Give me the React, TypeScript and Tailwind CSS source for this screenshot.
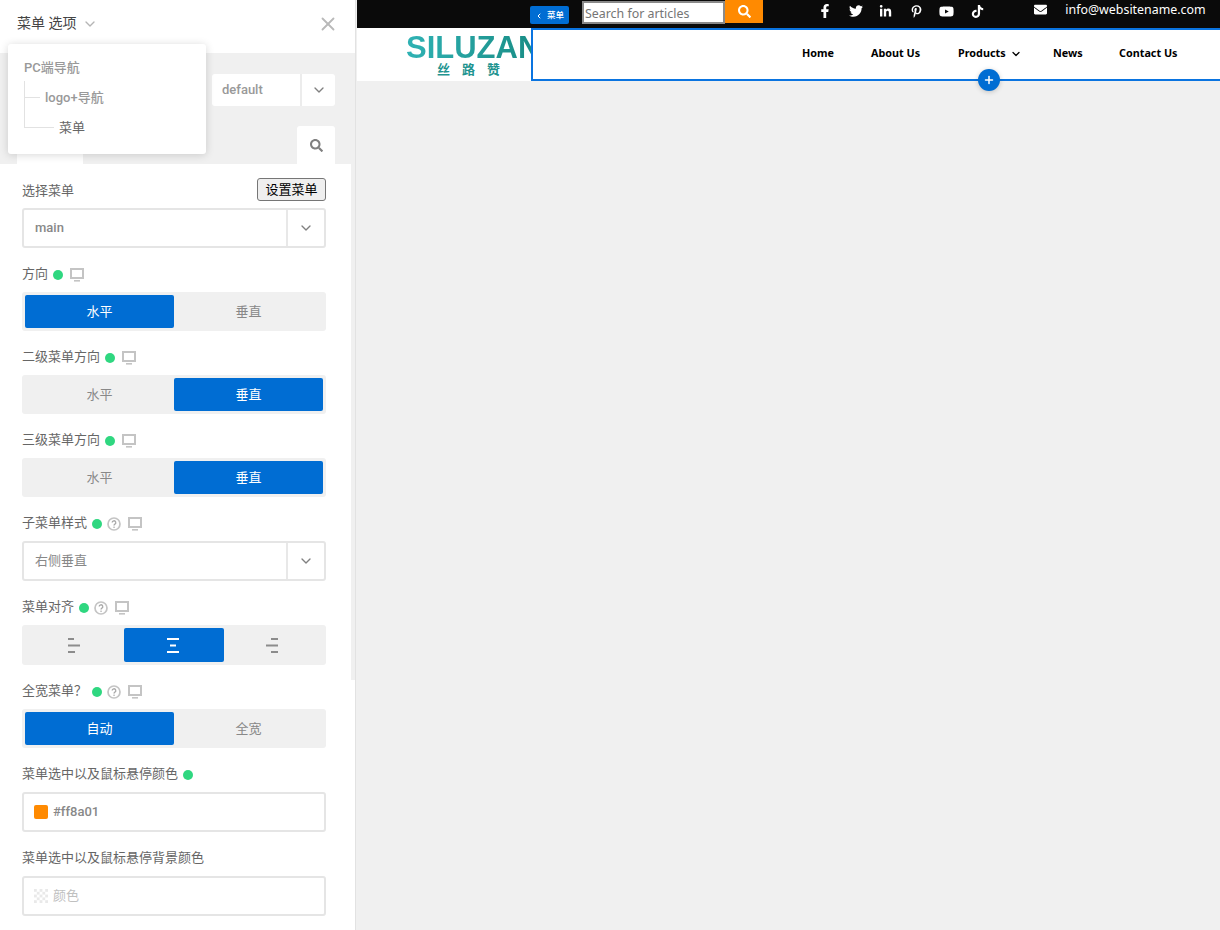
import type { ReactNode } from "react";
import { ChevronDown, ChevronLeft, Plus, X } from "lucide-react";
import {
  FaEnvelope,
  FaFacebookF,
  FaLinkedinIn,
  FaPinterestP,
  FaSearch,
  FaTiktok,
  FaTwitter,
  FaYoutube,
} from "react-icons/fa";

const socials = [
  { Icon: FaFacebookF, size: 14 },
  { Icon: FaTwitter, size: 14 },
  { Icon: FaLinkedinIn, size: 13 },
  { Icon: FaPinterestP, size: 13 },
  { Icon: FaYoutube, size: 15 },
  { Icon: FaTiktok, size: 13 },
];

function Dot() {
  return <span className="h-[10px] w-[10px] shrink-0 rounded-full bg-[#2fd780]" />;
}

function MonitorIcon() {
  return (
    <svg width="14" height="14" viewBox="0 0 14 14" className="shrink-0">
      <rect x="1" y="1" width="12" height="9" fill="none" stroke="#c4c4c4" strokeWidth="2" />
      <rect x="4" y="12" width="6" height="1.6" fill="#c4c4c4" />
    </svg>
  );
}

function HelpIcon() {
  return (
    <svg width="14" height="14" viewBox="0 0 14 14" className="shrink-0">
      <circle cx="7" cy="7" r="6" fill="none" stroke="#c4c4c4" strokeWidth="1.7" />
      <path d="M5.2 5.6a1.8 1.8 0 1 1 2.7 1.5c-.6.4-.9.7-.9 1.4" fill="none" stroke="#a8a8a8" strokeWidth="1.3" />
      <rect x="6.4" y="9.6" width="1.3" height="1.3" fill="#a8a8a8" />
    </svg>
  );
}

function Label({ text, dot, help, monitor }: { text: string; dot?: boolean; help?: boolean; monitor?: boolean }) {
  return (
    <div className="mb-[9px] flex h-[18px] items-center gap-[5px] pt-[2px] text-[13px] text-[#666]">
      <span className="pb-[2px]">{text}</span>
      {dot && <Dot />}
      {help && <HelpIcon />}
      {monitor && <span className="ml-[2px] flex"><MonitorIcon /></span>}
    </div>
  );
}

function SelectBox({ value, medium }: { value: string; medium?: boolean }) {
  return (
    <div className="flex h-[40px] items-stretch rounded-[3px] border-2 border-[#e5e5e5] bg-white">
      <div className={medium ? "flex flex-1 items-center pl-[11px] text-[13px] font-medium text-[#888]" : "flex flex-1 items-center pl-[11px] text-[13px] text-[#888]"}>
        {value}
      </div>
      <div className="flex w-[38px] items-center justify-center border-l-2 border-[#e8e8e8]">
        <ChevronDown size={16} strokeWidth={2} className="text-[#808080]" />
      </div>
    </div>
  );
}

function Toggle({ options, active }: { options: string[]; active: number }) {
  return (
    <div className="flex h-[39px] rounded-[3px] bg-[#f0f0f0] p-[3px]">
      {options.map((option, i) => (
        <div
          key={option}
          className={
            i === active
              ? "flex flex-1 items-center justify-center rounded-[2px] bg-[#006dd3] text-[13px] text-white"
              : "flex flex-1 items-center justify-center text-[13px] text-[#888]"
          }
        >
          {option}
        </div>
      ))}
    </div>
  );
}

function AlignIcon({ align, color }: { align: "left" | "center" | "right"; color: string }) {
  const rows =
    align === "left"
      ? [[0, 6], [0, 12], [0, 7]]
      : align === "center"
        ? [[0, 12], [3, 6], [0, 12]]
        : [[5, 7], [0, 12], [5, 7]];
  return (
    <svg width="12" height="16" viewBox="0 0 12 16">
      {rows.map(([x, w], i) => (
        <rect key={i} x={x} y={1 + i * 6.5} width={w} height="2" fill={color} />
      ))}
    </svg>
  );
}

function Field({ children }: { children: ReactNode }) {
  return <div className="mb-[17px]">{children}</div>;
}

function TransparentSwatch() {
  const cells = Array.from({ length: 25 }, (_, i) => i);
  return (
    <svg width="14" height="14" viewBox="0 0 15 15" className="shrink-0">
      {cells.map((c) =>
        c % 2 === 0 ? (
          <rect key={c} x={(c % 5) * 3} y={Math.floor(c / 5) * 3} width="3" height="3" fill="#e9e9e9" />
        ) : null,
      )}
    </svg>
  );
}

function Sidebar() {
  return (
    <aside className="relative h-[930px] w-[356px] shrink-0 overflow-hidden border-r border-[#e2e2e2] bg-white">
      <header className="flex h-[53px] items-center justify-between pl-[17px] pr-[16px]">
        <div className="flex items-center gap-[6px] pb-[6px] text-[14px] text-[#444]">
          <span>菜单 选项</span>
          <ChevronDown size={16} className="text-[#b5b5b5]" />
        </div>
        <X size={22} strokeWidth={2} className="mb-[5px] text-[#b9b9b9]" />
      </header>

      <div className="flex h-[111px] flex-col items-end bg-[#f0f0f0] pl-[17px] pr-[20px] pt-[21px]">
        <div className="flex h-[32px] w-[123px] rounded-[3px] bg-white">
          <div className="flex flex-1 items-center border-r-2 border-[#ececec] pl-[10px] text-[13px] font-medium text-[#999]">default</div>
          <div className="flex w-[33px] items-center justify-center">
            <ChevronDown size={16} className="text-[#808080]" />
          </div>
        </div>
        <div className="mt-auto flex w-full items-end justify-between">
          <div className="h-[10px] w-[66px] bg-white" />
          <div className="flex h-[38px] w-[38px] items-center justify-center rounded-t-[3px] bg-white">
            <FaSearch size={13} className="text-[#808080]" />
          </div>
        </div>
      </div>

      <div className="h-[766px] w-[351px] overflow-hidden pl-[22px] pr-[25px] pt-[14px]">
        <div className="mb-[7px] flex h-[23px] items-center justify-between text-[13px] text-[#666]">
          <span className="pt-[2px]">选择菜单</span>
          <button type="button" className="h-[23px] w-[69px] rounded-[3px] border border-[#767676] bg-[#efefef] text-[13px] text-black">
            设置菜单
          </button>
        </div>
        <Field><SelectBox value="main" medium /></Field>

        <Field>
          <Label text="方向" dot monitor />
          <Toggle options={["水平", "垂直"]} active={0} />
        </Field>
        <Field>
          <Label text="二级菜单方向" dot monitor />
          <Toggle options={["水平", "垂直"]} active={1} />
        </Field>
        <Field>
          <Label text="三级菜单方向" dot monitor />
          <Toggle options={["水平", "垂直"]} active={1} />
        </Field>
        <Field>
          <Label text="子菜单样式" dot help monitor />
          <SelectBox value="右侧垂直" />
        </Field>
        <Field>
          <Label text="菜单对齐" dot help monitor />
          <div className="flex h-[40px] rounded-[3px] bg-[#f0f0f0] py-[3px]">
            <div className="flex w-[102px] items-center justify-center pl-[2px]"><AlignIcon align="left" color="#8c8c8c" /></div>
            <div className="flex w-[100px] items-center justify-center rounded-[2px] bg-[#006dd3] pr-[2px]"><AlignIcon align="center" color="#ffffff" /></div>
            <div className="flex w-[102px] items-center justify-center pr-[6px]"><AlignIcon align="right" color="#8c8c8c" /></div>
          </div>
        </Field>
        <Field>
          <Label text="全宽菜单？" dot help monitor />
          <Toggle options={["自动", "全宽"]} active={0} />
        </Field>
        <Field>
          <Label text="菜单选中以及鼠标悬停颜色" dot />
          <div className="flex h-[40px] items-center gap-[5px] rounded-[3px] border-2 border-[#e5e5e5] pl-[10px] text-[13px] font-medium text-[#888]">
            <span className="h-[14px] w-[14px] rounded-[2px] bg-[#ff8a01]" />
            #ff8a01
          </div>
        </Field>
        <Field>
          <Label text="菜单选中以及鼠标悬停背景颜色" />
          <div className="flex h-[40px] items-center gap-[5px] rounded-[3px] border-2 border-[#e5e5e5] pl-[10px] text-[13px] text-[#c0c0c0]">
            <TransparentSwatch />
            颜色
          </div>
        </Field>
      </div>

      {/* scrollbar thumb */}
      <div className="absolute left-[351px] top-[164px] h-[516px] w-[4px] bg-[#f0f0f0]" />

      {/* breadcrumb popover */}
      <div className="absolute left-[8px] top-[44px] h-[110px] w-[198px] rounded-[3px] bg-white shadow-[0_1px_8px_rgba(0,0,0,0.16)]">
        <div className="absolute left-[16px] top-[15px] text-[13px] font-medium leading-[18px] text-[#999]">PC端导航</div>
        <div className="absolute left-[16px] top-[37px] h-[47px] w-px bg-[#e2e2e2]" />
        <div className="absolute left-[16px] top-[53px] h-px w-[16px] bg-[#e2e2e2]" />
        <div className="absolute left-[16px] top-[83px] h-px w-[30px] bg-[#e2e2e2]" />
        <div className="absolute left-[37px] top-[45px] text-[13px] font-medium leading-[18px] text-[#999]">logo+导航</div>
        <div className="absolute left-[51px] top-[75px] text-[13px] leading-[18px] text-[#666]">菜单</div>
      </div>
    </aside>
  );
}

function TopBar() {
  return (
    <div className="flex h-[28px] items-start bg-[#0a0a0a] pl-[173px] text-white">
      <div className="mt-[6px] flex h-[18px] w-[39px] items-center justify-center gap-[4px] rounded-[2px] bg-[#006dd3] pt-px text-[8.5px] font-medium">
        <ChevronLeft size={8} strokeWidth={3} />
        <span>菜单</span>
      </div>
      <div className="ml-[13px] mt-px flex h-[23px] w-[143px] items-center border-2 border-[#8a8a8a] bg-white pl-px pt-[3px] font-['Noto_Sans'] text-[12.4px] text-[#757575]">
        Search for articles
      </div>
      <div className="flex h-[23px] w-[38px] items-center justify-center bg-[#ff8a01]">
        <FaSearch size={13} />
      </div>
      <div className="ml-[47px] mt-[4px] flex items-center">
        {socials.map(({ Icon, size }, i) => (
          <div key={i} className="flex h-[14px] w-[30.4px] items-center justify-center">
            <Icon size={size} />
          </div>
        ))}
      </div>
      <FaEnvelope size={13} className="ml-[42px] mt-[2.5px]" />
      <span className="ml-[18px] mt-px font-['Noto_Sans'] text-[12.4px] leading-[18px]">info@websitename.com</span>
    </div>
  );
}

function NavBar() {
  return (
    <div className="flex h-[53px] bg-white">
      <div className="w-[174px] shrink-0 overflow-hidden pl-[49px]">
        <div className="mt-[5px] w-[140px] bg-gradient-to-r from-[#2fb2b4] to-[#178a82] bg-clip-text font-['Liberation_Sans'] text-[31px] font-bold leading-[30px] text-transparent">
          SILUZAN
        </div>
        <div className="ml-[31px] flex w-[63px] justify-between text-[13px] font-bold leading-[13px] text-[#1f9490]">
          <span>丝</span>
          <span>路</span>
          <span>赞</span>
        </div>
      </div>
      <nav className="relative flex flex-1 items-center border-2 border-r-0 border-[#0a74e0] pb-[2px] pl-[269px] font-['Noto_Sans'] text-[10.8px] font-bold text-black">
        <span className="w-[69px]">Home</span>
        <span className="w-[87px]">About Us</span>
        <span className="flex w-[95px] items-center gap-[4px]">
          Products
          <ChevronDown size={12} strokeWidth={2.5} />
        </span>
        <span className="w-[66px]">News</span>
        <span>Contact Us</span>
        <div className="absolute bottom-[-12px] left-[445px] flex h-[22px] w-[22px] items-center justify-center rounded-full bg-[#006dd3] text-white shadow-[0_1px_5px_rgba(0,0,0,0.2)]">
          <Plus size={12} strokeWidth={3} />
        </div>
      </nav>
    </div>
  );
}

export default function App() {
  return (
    <div className="flex h-[930px] w-[1220px] overflow-hidden bg-[#f0f0f0] font-['Roboto','Noto_Sans_CJK_SC',sans-serif]">
      <Sidebar />
      <main className="w-[864px] pl-px">
        <TopBar />
        <NavBar />
      </main>
    </div>
  );
}
